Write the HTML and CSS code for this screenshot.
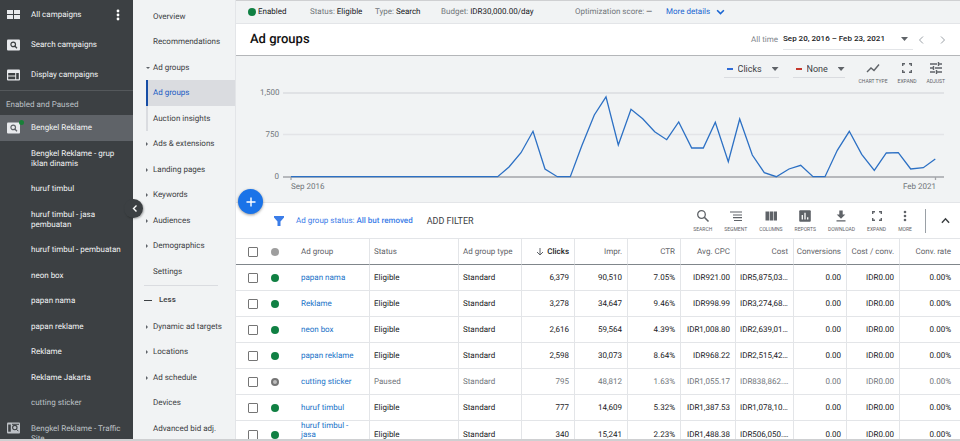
FILE: index.html
```html
<!DOCTYPE html>
<html lang="en">
<head>
    <meta charset="UTF-8">
    <meta name="viewport" content="width=device-width, initial-scale=1.0">
    <title>Ad groups</title>
    <link rel="stylesheet" href="styles.css">
</head>
<body>

    <div class="app">
        <!-- Campaign list -->
        <aside class="campaigns">
            <ul class="campaign-types">
                <li>
                    <svg class="side-icon" viewBox="0 0 14 12"><path d="M0 1h6v4H0zM7 1h6v4H7zM0 6h6v4H0zM7 6h6v4H7z"/></svg>
                    <a href="#">All campaigns</a>
                    <button class="kebab" aria-label="More">
                        <svg viewBox="0 0 4 12"><circle cx="2" cy="2" r="1.4"/><circle cx="2" cy="6" r="1.4"/><circle cx="2" cy="10" r="1.4"/></svg>
                    </button>
                </li>
                <li>
                    <svg class="side-icon" viewBox="0 0 14 12"><rect y="0.5" width="13" height="11" rx="1"/><circle cx="6.2" cy="5.4" r="2.3" fill="none" stroke="#3c4043" stroke-width="1.2"/><path d="M7.8 7l2.2 2.2" stroke="#3c4043" stroke-width="1.3"/></svg>
                    <a href="#">Search campaigns</a>
                </li>
                <li>
                    <svg class="side-icon" viewBox="0 0 14 12"><rect y="0.5" width="13" height="11" rx="1"/><path d="M1.2 4h7v2.6h-7zM1.2 7.6h7v2.6h-7zM9.2 4h2.6v6.2H9.2z" fill="#3c4043"/></svg>
                    <a href="#">Display campaigns</a>
                </li>
            </ul>
            <h2 class="campaigns-heading">Enabled and Paused</h2>
            <ul class="campaign-list">
                <li class="current">
                    <svg class="side-icon" viewBox="0 0 14 12"><rect y="0.5" width="13" height="11" rx="1"/><circle cx="6.2" cy="5.4" r="2.3" fill="none" stroke="#5f6368" stroke-width="1.2"/><path d="M7.8 7l2.2 2.2" stroke="#5f6368" stroke-width="1.3"/></svg>
                    <span class="live-dot"></span>
                    <a href="#">Bengkel Reklame</a>
                </li>
                <li class="two-line"><a href="#">Bengkel Reklame - grup iklan dinamis</a></li>
                <li><a href="#">huruf timbul</a></li>
                <li class="two-line"><a href="#">huruf timbul - jasa pembuatan</a></li>
                <li><a href="#">huruf timbul - pembuatan</a></li>
                <li><a href="#">neon box</a></li>
                <li><a href="#">papan nama</a></li>
                <li><a href="#">papan reklame</a></li>
                <li><a href="#">Reklame</a></li>
                <li><a href="#">Reklame Jakarta</a></li>
                <li class="paused"><a href="#">cutting sticker</a></li>
                <li class="two-line paused">
                    <svg class="side-icon" viewBox="0 0 14 12"><rect y="0.5" width="13" height="11" rx="1"/><path d="M1.2 2.5h2.6v7.2H1.2z" fill="#3c4043"/><circle cx="7.8" cy="5.6" r="2.2" fill="none" stroke="#3c4043" stroke-width="1.1"/><path d="M9.4 7.2l2 2M5 2.3h7" stroke="#3c4043"/></svg>
                    <a href="#">Bengkel Reklame - Traffic Site</a>
                </li>
            </ul>
            <button class="collapse" aria-label="Collapse">
                <svg viewBox="0 0 6 8"><path d="M4.5 1L1.5 4l3 3" fill="none" stroke="#fff" stroke-width="1.4"/></svg>
            </button>
        </aside>

        <!-- Page menu -->
        <nav class="menu">
            <ul>
                <li><a href="#">Overview</a></li>
                <li><a href="#">Recommendations</a></li>
                <li class="open"><a href="#">Ad groups</a></li>
                <li class="sub active"><a href="#">Ad groups</a></li>
                <li class="sub"><a href="#">Auction insights</a></li>
                <li class="closed"><a href="#">Ads &amp; extensions</a></li>
                <li class="closed"><a href="#">Landing pages</a></li>
                <li class="closed"><a href="#">Keywords</a></li>
                <li class="closed"><a href="#">Audiences</a></li>
                <li class="closed"><a href="#">Demographics</a></li>
                <li><a href="#">Settings</a></li>
            </ul>
            <button class="less"><span class="minus"></span>Less</button>
            <ul>
                <li class="closed"><a href="#">Dynamic ad targets</a></li>
                <li class="closed"><a href="#">Locations</a></li>
                <li class="closed"><a href="#">Ad schedule</a></li>
                <li><a href="#">Devices</a></li>
                <li><a href="#">Advanced bid adj.</a></li>
            </ul>
        </nav>

        <main class="content">
            <div class="status-bar">
                <div class="enabled"><span class="dot"></span>Enabled</div>
                <div>Status: <b>Eligible</b></div>
                <div>Type: <b>Search</b></div>
                <div>Budget: <b>IDR30,000.00/day</b></div>
                <div>Optimization score: <b>—</b></div>
                <a href="#">More details
                    <svg viewBox="0 0 8 6"><path d="M1 1l3 3 3-3" fill="none" stroke="#1a66d2" stroke-width="1.4"/></svg>
                </a>
            </div>

            <header class="title-bar">
                <h1>Ad groups</h1>
                <span class="range-label">All time</span>
                <button class="range">Sep 20, 2016 – Feb 23, 2021<span class="caret"></span></button>
                <button class="step" aria-label="Previous"><svg viewBox="0 0 6 8"><path d="M5 0.5L1.5 4 5 7.5"/></svg></button>
                <button class="step" aria-label="Next"><svg viewBox="0 0 6 8"><path d="M1 0.5L4.5 4 1 7.5"/></svg></button>
            </header>

            <section class="chart">
                <div class="chart-tools">
                    <label class="metric"><span class="dash"></span>
                        <select aria-label="First metric"><option>Clicks</option></select><span class="caret"></span>
                    </label>
                    <label class="metric"><span class="dash red"></span>
                        <select aria-label="Second metric"><option>None</option></select><span class="caret"></span>
                    </label>
                    <button class="tool"><svg viewBox="0 0 14 14"><path d="M1 11l4-4 3 2.5 5-6" fill="none" stroke="#5f6368" stroke-width="1.4"/></svg>CHART TYPE</button>
                    <button class="tool"><svg viewBox="0 0 14 14"><path d="M5 2.7H2.7V5M9 2.7h2.3V5M5 11.3H2.7V9M9 11.3h2.3V9" fill="none" stroke="#5f6368" stroke-width="1.4"/></svg>EXPAND</button>
                    <button class="tool"><svg viewBox="0 0 14 14"><path d="M1 3h7M10 3h3M9.5 1v4M1 7h3M6 7h7M4.5 5v4M1 11h5M8 11h5M7.500 9v4" fill="none" stroke="#5f6368" stroke-width="1.4"/></svg>ADJUST</button>
                </div>
                <div class="plot">
                    <div class="scale"><span>1,500</span><span>750</span><span>0</span></div>
                    <svg class="line" viewBox="0 0 661 94" preserveAspectRatio="none">
                        <path d="M0 5h661" stroke="#dadce0" stroke-width="1.5"/>
                        <path d="M0 46.500h661" stroke="#e3e4e7" stroke-width="1.5"/>
                        <path d="M0 89h661M8 89v3M652.500 89v3" fill="none" stroke="#a3a5a9" stroke-width="1.3"/>
                        <polyline fill="none" stroke="#2c70c4" stroke-width="1.3" points="8,88.700 214.700,88.700 226,79 238,64.700 250,43.300 262,81 274.300,88.700 287.300,88.700 299,57.300 311.300,27 323,8.800 335.300,57 348,21.300 359.700,30.700 371.700,43.700 383.700,51.700 395.700,34 408.700,60 420.300,60 432.300,34.300 445.300,73.700 456.700,31 469.300,67 481.300,84.700 493.300,88.700 506,81 517.700,77.300 530,88.700 542,88.700 554.300,62.300 566.300,43.300 578.700,66.300 591.300,82.300 603.300,65 615.300,64.700 627.700,81 640.300,79.700 652.300,71"/>
                    </svg>
                    <div class="dates"><span>Sep 2016</span><span>Feb 2021</span></div>
                </div>
                <button class="add" aria-label="Add">
                    <svg viewBox="0 0 10 10"><path d="M5 0.500v9M0.500 5h9" stroke="#fff" stroke-width="1.400"/></svg>
                </button>
            </section>

            <div class="table-tools">
                <svg class="funnel" viewBox="0 0 10 10"><path d="M0 0h10v1.500L6.500 5.500V10h-3V5.500L0 1.500z" fill="#3b7de8"/></svg>
                <a class="filter" href="#">Ad group status: <b>All but removed</b></a>
                <button class="add-filter">ADD FILTER</button>
                <div class="actions">
                    <button class="tool"><svg viewBox="0 0 14 14"><circle cx="5.500" cy="5.500" r="3.800" fill="none" stroke="#5f6368" stroke-width="1.300"/><path d="M8.300 8.300l4.200 4.200" stroke="#5f6368" stroke-width="1.600"/></svg>SEARCH</button>
                    <button class="tool"><svg viewBox="0 0 14 14"><path d="M1 3h12M4 6h9M4 8.700h9M5 11.500h8" stroke="#5f6368" stroke-width="1.200"/></svg>SEGMENT</button>
                    <button class="tool"><svg viewBox="0 0 14 14"><path d="M1.500 2.500H5v9H1.500zM5.600 2.500H9v9H5.600zM9.600 2.500H13v9H9.600z" fill="#5f6368"/></svg>COLUMNS</button>
                    <button class="tool"><svg viewBox="0 0 14 14"><rect x="1.200" y="1.200" width="11.600" height="11.600" rx="1" fill="#5f6368"/><path d="M4.300 6v4.500M7 3.800v6.700M9.700 8.200v2.300" stroke="#fff" stroke-width="1.300"/></svg>REPORTS</button>
                    <button class="tool"><svg viewBox="0 0 14 14"><path d="M5.300 1.500h3.400v4h2.600L7 9.800 2.700 5.500h2.600zM2.500 11.200h9v1.300h-9z" fill="#5f6368"/></svg>DOWNLOAD</button>
                    <button class="tool"><svg viewBox="0 0 14 14"><path d="M5 2.700H2.700V5M9 2.700h2.300V5M5 11.300H2.700V9M9 11.300h2.300V9" fill="none" stroke="#5f6368" stroke-width="1.400"/></svg>EXPAND</button>
                    <button class="tool"><svg viewBox="0 0 14 14" fill="#5f6368"><circle cx="7" cy="3" r="1.300"/><circle cx="7" cy="7" r="1.300"/><circle cx="7" cy="11" r="1.300"/></svg>MORE</button>
                </div>
                <button class="fold" aria-label="Hide chart"><svg viewBox="0 0 8 6"><path d="M0.800 5L4 1.500 7.200 5" fill="none" stroke="#3c4043" stroke-width="1.300"/></svg></button>
            </div>

            <table class="groups">
                <colgroup>
                    <col class="c-check"><col class="c-dot"><col class="c-name"><col class="c-status"><col class="c-type">
                    <col class="c-num"><col class="c-num"><col class="c-num"><col class="c-cpc"><col class="c-cost">
                    <col class="c-num"><col class="c-num"><col class="c-rate">
                </colgroup>
                <thead>
                    <tr>
                        <th><input type="checkbox" aria-label="Select all"></th>
                        <th><span class="dot grey"></span></th>
                        <th>Ad group</th>
                        <th>Status</th>
                        <th>Ad group type</th>
                        <th class="sorted"><svg viewBox="0 0 8 8"><path d="M4 0v7M1 4l3 3 3-3" fill="none" stroke="#5f6368"/></svg>Clicks</th>
                        <th>Impr.</th>
                        <th>CTR</th>
                        <th>Avg. CPC</th>
                        <th>Cost</th>
                        <th>Conversions</th>
                        <th>Cost / conv.</th>
                        <th>Conv. rate</th>
                    </tr>
                </thead>
                <tbody>
                    <tr>
                        <td><input type="checkbox" aria-label="papan nama"></td><td><span class="dot"></span></td>
                        <td><a href="#">papan nama</a></td><td>Eligible</td><td>Standard</td>
                        <td>6,379</td><td>90,510</td><td>7.05%</td><td>IDR921.00</td><td>IDR5,875,03…</td><td>0.00</td><td>IDR0.00</td><td>0.00%</td>
                    </tr>
                    <tr>
                        <td><input type="checkbox" aria-label="Reklame"></td><td><span class="dot"></span></td>
                        <td><a href="#">Reklame</a></td><td>Eligible</td><td>Standard</td>
                        <td>3,278</td><td>34,647</td><td>9.46%</td><td>IDR998.99</td><td>IDR3,274,68…</td><td>0.00</td><td>IDR0.00</td><td>0.00%</td>
                    </tr>
                    <tr>
                        <td><input type="checkbox" aria-label="neon box"></td><td><span class="dot"></span></td>
                        <td><a href="#">neon box</a></td><td>Eligible</td><td>Standard</td>
                        <td>2,616</td><td>59,564</td><td>4.39%</td><td>IDR1,008.80</td><td>IDR2,639,01…</td><td>0.00</td><td>IDR0.00</td><td>0.00%</td>
                    </tr>
                    <tr>
                        <td><input type="checkbox" aria-label="papan reklame"></td><td><span class="dot"></span></td>
                        <td><a href="#">papan reklame</a></td><td>Eligible</td><td>Standard</td>
                        <td>2,598</td><td>30,073</td><td>8.64%</td><td>IDR968.22</td><td>IDR2,515,42…</td><td>0.00</td><td>IDR0.00</td><td>0.00%</td>
                    </tr>
                    <tr class="paused">
                        <td><input type="checkbox" aria-label="cutting sticker"></td><td><span class="dot pause"></span></td>
                        <td><a href="#">cutting sticker</a></td><td>Paused</td><td>Standard</td>
                        <td>795</td><td>48,812</td><td>1.63%</td><td>IDR1,055.17</td><td>IDR838,862.…</td><td>0.00</td><td>IDR0.00</td><td>0.00%</td>
                    </tr>
                    <tr>
                        <td><input type="checkbox" aria-label="huruf timbul"></td><td><span class="dot"></span></td>
                        <td><a href="#">huruf timbul</a></td><td>Eligible</td><td>Standard</td>
                        <td>777</td><td>14,609</td><td>5.32%</td><td>IDR1,387.53</td><td>IDR1,078,10…</td><td>0.00</td><td>IDR0.00</td><td>0.00%</td>
                    </tr>
                    <tr>
                        <td><input type="checkbox" aria-label="huruf timbul - jasa pembuatan"></td><td><span class="dot"></span></td>
                        <td><a href="#">huruf timbul - jasa pembuatan</a></td><td>Eligible</td><td>Standard</td>
                        <td>340</td><td>15,241</td><td>2.23%</td><td>IDR1,488.38</td><td>IDR506,050.…</td><td>0.00</td><td>IDR0.00</td><td>0.00%</td>
                    </tr>
                </tbody>
            </table>
        </main>
    </div>

</body>
</html>
```
FILE: styles.css
```css
* {
    box-sizing: border-box;
}

body {
    margin: 0;
    font-family: Roboto, sans-serif;
    font-size: 8px;
    line-height: 10px;
    color: #3c4043;
    background-color: #fff;
    text-rendering: geometricPrecision;
}

ul {
    list-style: none;
    margin: 0;
    padding: 0;
}

a {
    color: inherit;
    text-decoration: none;
}

b {
    font-weight: 400;
}

svg {
    display: block;
    flex: none;
}

button,
select {
    font: inherit;
    color: inherit;
    background: none;
    border: 0;
    padding: 0;
    margin: 0;
    cursor: pointer;
}

.app {
    display: flex;
    height: 100vh;
    overflow: hidden;
    border-bottom: 2px solid #cfd0d2;
}

/* Campaign list */
.campaigns {
    position: relative;
    flex: none;
    width: 133px;
    background-color: #3c4043;
    color: #f1f3f4;
    z-index: 2;
}

.campaigns li {
    position: relative;
    display: flex;
    align-items: center;
    height: 25px;
    padding: 0 10px 0 31px;
}

.campaigns a {
    flex: 1;
}

.side-icon {
    position: absolute;
    left: 7px;
    width: 14px;
    height: 12px;
    fill: #e8eaed;
}

.campaign-types {
    border-bottom: 1px solid #54585b;
}

.campaigns .campaign-types li {
    height: 30px;
}

.kebab svg {
    width: 10px;
    height: 12px;
    fill: #fff;
}

.campaigns-heading {
    margin: 0;
    padding: 9px 6px 5px;
    font-size: 8px;
    font-weight: 400;
    color: #bdc1c6;
}

.campaigns .current {
    background-color: #5f6368;
}

.campaigns .campaign-list li:nth-child(odd) {
    height: 26px;
}

.campaigns .campaign-list .two-line {
    height: 35px;
}

.campaigns .paused {
    color: #bdc1c6;
}

.campaigns .paused .side-icon {
    top: 6px;
    fill: #bdc1c6;
}

.live-dot {
    position: absolute;
    left: 19px;
    top: 5px;
    width: 5px;
    height: 5px;
    border-radius: 50%;
    background-color: #188038;
}

.collapse {
    position: absolute;
    top: 199px;
    right: -10px;
    width: 19px;
    height: 19px;
    padding-left: 8px;
    border-radius: 50%;
    background-color: #3c4043;
    box-shadow: 1px 1px 2px rgba(0, 0, 0, 0.3);
}

.collapse svg {
    width: 6px;
    height: 9px;
}

/* Page menu */
.menu {
    flex: none;
    width: 103px;
    padding-top: 4px;
    background-color: #f1f3f4;
    border-right: 1px solid #e3e5e8;
}

.menu li {
    position: relative;
    display: flex;
    align-items: center;
    height: 25px;
    margin-left: 13px;
    padding-left: 7px;
    white-space: nowrap;
}

.menu li:nth-child(even) {
    height: 26px;
}

.menu .open::before,
.menu .closed::before {
    content: "";
    position: absolute;
    left: 0;
    border: 2px solid transparent;
}

.menu .open::before {
    top: 12px;
    border-top-color: #5f6368;
}

.menu .closed::before {
    border-left-color: #5f6368;
}

.menu .sub {
    padding-left: 5px;
    border-left: 2px solid #dadce0;
}

.menu .active {
    background-color: #dadce0;
    border-left-color: #174ea6;
    color: #1a5dc4;
}

.less {
    display: flex;
    align-items: center;
    gap: 7px;
    width: 74px;
    height: 29px;
    margin-left: 11px;
    margin-top: 1px;
    border-top: 1px solid #dadce0;
    font-weight: 500;
}

.minus {
    width: 8px;
    height: 1px;
    background-color: #3c4043;
}

/* Main column */
.content {
    flex: 1;
    min-width: 0;
    overflow: hidden;
}

.dot {
    display: block;
    flex: none;
    width: 8px;
    height: 8px;
    border-radius: 50%;
    background-color: #108043;
}

.dot.grey {
    background-color: #9e9e9e;
}

.dot.pause {
    border: 2px solid #757575;
    background-color: #bdbdbd;
}

.caret {
    width: 7px;
    height: 4px;
    background-color: #5f6368;
    clip-path: polygon(0 0, 100% 0, 50% 100%);
}

.status-bar {
    display: grid;
    grid-template-columns: 62px 65px 66px 134px 91px auto;
    align-items: center;
    height: 24px;
    padding-left: 12px;
    border-top: 1px solid #cfd0d2;
    border-bottom: 1px solid #e3e5e8;
    background-color: #f1f3f4;
    color: #70757a;
    white-space: nowrap;
}

.status-bar b,
.enabled {
    color: #202124;
}

.enabled {
    display: flex;
    align-items: center;
    gap: 2px;
}

.status-bar a {
    display: flex;
    align-items: center;
    gap: 6px;
    color: #1a66d2;
}

.status-bar svg {
    width: 9px;
    height: 7px;
}

.title-bar {
    display: flex;
    align-items: center;
    height: 32px;
    padding: 0 14px;
    border-bottom: 1px solid #b4b6b9;
}

.title-bar h1 {
    flex: 1;
    margin: 0;
    font-size: 13px;
    line-height: 16px;
    font-weight: 500;
    color: #111;
}

.range-label {
    color: #80868b;
}

.range {
    display: flex;
    align-items: center;
    justify-content: space-between;
    width: 130px;
    height: 20px;
    margin: 0 5px;
    padding-right: 5px;
    border-bottom: 1px solid #e3e5e8;
    font-weight: 500;
    color: #202124;
}

.step {
    width: 6px;
}

.step + .step {
    margin-left: 16px;
}

.step svg {
    width: 6px;
    height: 8px;
    fill: none;
    stroke: #9aa0a6;
}

/* Chart */
.chart {
    position: relative;
    padding: 5px 16px 0 24px;
    height: 147px;
    background-color: #f1f3f4;
    border-bottom: 1px solid #e3e5e8;
}

.chart-tools {
    display: flex;
    justify-content: flex-end;
    gap: 10px;
    height: 27px;
    margin-right: -1px;
}

.metric {
    display: flex;
    align-items: center;
    gap: 5px;
    height: 17px;
    padding-left: 3px;
    margin-right: 4px;
    border-bottom: 1px solid #dadce0;
    font-size: 9px;
}

.metric select {
    appearance: none;
    margin-right: 4px;
}

.dash {
    width: 6px;
    height: 2px;
    background-color: #2f6bd6;
}

.dash.red {
    background-color: #c5372c;
}

.tool {
    display: flex;
    flex-direction: column;
    align-items: center;
    gap: 2px;
    font-size: 5px;
    line-height: 8px;
    color: #5f6368;
}

.tool svg {
    width: 14px;
    height: 14px;
}

.plot {
    display: grid;
    grid-template-columns: 19px 1fr;
    column-gap: 4px;
}

.scale {
    display: flex;
    flex-direction: column;
    justify-content: space-between;
    text-align: right;
    color: #70757a;
}

.line {
    width: 100%;
    height: 94px;
}

.dates {
    grid-column: 2;
    display: flex;
    justify-content: space-between;
    padding: 0 8px;
    color: #70757a;
}

.add {
    position: absolute;
    left: 2px;
    bottom: -12px;
    display: flex;
    align-items: center;
    justify-content: center;
    width: 25px;
    height: 25px;
    border-radius: 50%;
    background-color: #1a73e8;
    box-shadow: 0 1px 3px rgba(0, 0, 0, 0.4);
}

.add svg {
    width: 10px;
    height: 10px;
}

/* Filter and table actions */
.table-tools {
    display: flex;
    align-items: center;
    height: 35px;
    padding: 0 10px 0 38px;
    color: #3c4043;
}

.funnel {
    width: 10px;
    height: 10px;
    margin-right: 12px;
}

.filter {
    color: #3b7de8;
}

.filter b {
    font-weight: 500;
}

.add-filter {
    margin-left: 14px;
    font-size: 9px;
}

.actions {
    display: flex;
    gap: 12px;
    margin-left: auto;
    padding-right: 13px;
    border-right: 1px solid #9aa0a6;
}

.fold {
    margin-left: 15px;
}

.fold svg {
    width: 9px;
    height: 7px;
}

/* Table */
.groups {
    width: 100%;
    table-layout: fixed;
    border-collapse: separate;
    border-spacing: 0;
    border-top: 1px solid #e3e5e8;
}

.c-check { width: 27px; }
.c-dot { width: 24px; }
.c-name { width: 83px; }
.c-status { width: 89px; }
.c-type { width: 63px; }
.c-num { width: 53px; }
.c-cpc { width: 55px; }
.c-cost { width: 58px; }
.c-rate { width: 60px; }

.groups th,
.groups td {
    height: 26px;
    padding: 0 5px 0 0;
    border-right: 1px solid #e3e5e8;
    border-bottom: 1px solid #e3e5e8;
    font-weight: 400;
    line-height: 9px;
    text-align: right;
    white-space: nowrap;
}

.groups td {
    color: #202124;
}

.groups th {
    border-bottom-color: #80868b;
    color: #5f6368;
}

.groups th:nth-child(-n+5),
.groups td:nth-child(-n+5) {
    padding: 0 0 0 4px;
    text-align: left;
}

.groups th:nth-child(-n+2),
.groups td:nth-child(-n+2) {
    padding: 0 0 0 8px;
    border-right: 0;
}

.groups th:nth-child(1),
.groups td:nth-child(1) {
    padding: 0 0 0 12px;
}

.groups th:nth-child(3),
.groups td:nth-child(3) {
    padding: 0 14px;
    white-space: normal;
}

.groups td:nth-child(10) {
    padding: 0 0 0 4px;
    text-align: left;
}

.groups th:last-child,
.groups td:last-child {
    padding-right: 9px;
    border-right: 0;
}

.groups .sorted {
    font-weight: 500;
    color: #202124;
}

.sorted svg {
    display: inline-block;
    width: 8px;
    height: 8px;
    margin-right: 3px;
    vertical-align: middle;
}

.groups td a {
    color: #1a73c8;
}

.groups .paused td {
    color: #70757a;
}

.groups input {
    display: block;
    appearance: none;
    width: 10px;
    height: 10px;
    margin: 0;
    border: 1px solid #757575;
    border-radius: 1px;
    background-color: #fff;
}
```
